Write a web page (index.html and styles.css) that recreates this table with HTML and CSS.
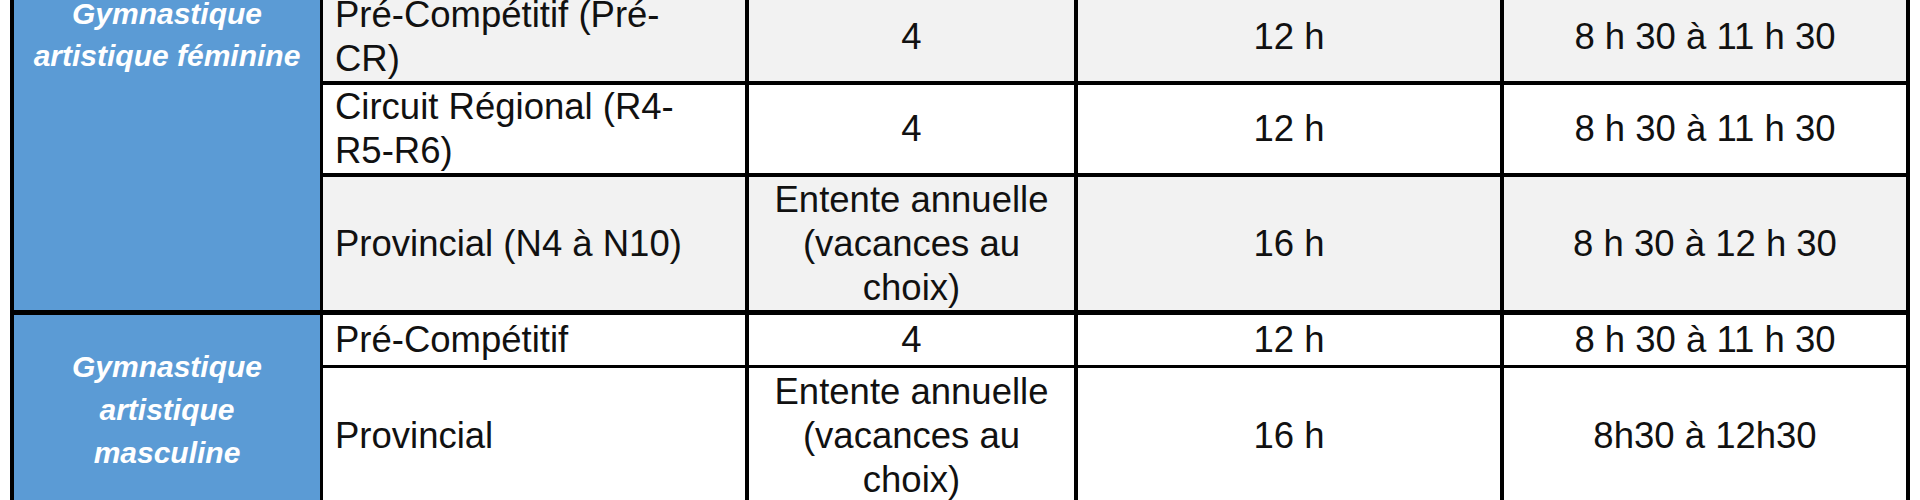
FILE: index.html
```html
<!DOCTYPE html>
<html lang="fr">
<head>
<meta charset="utf-8">
<title>Horaires gymnastique</title>
<link rel="stylesheet" href="styles.css">
</head>
<body>
<table class="schedule">
  <colgroup>
    <col class="c-discipline">
    <col class="c-level">
    <col class="c-days">
    <col class="c-hours">
    <col class="c-time">
  </colgroup>
  <tbody>
    <tr class="row-shaded row-1">
      <td class="discipline discipline-top" rowspan="3">Gymnastique artistique féminine</td>
      <td class="level">Pré-Compétitif (Pré-CR)</td>
      <td class="center">4</td>
      <td class="center">12 h</td>
      <td class="center">8 h 30 à 11 h 30</td>
    </tr>
    <tr class="row-2">
      <td class="level">Circuit Régional (R4-R5-R6)</td>
      <td class="center">4</td>
      <td class="center">12 h</td>
      <td class="center">8 h 30 à 11 h 30</td>
    </tr>
    <tr class="row-shaded row-3 group-end">
      <td class="level">Provincial (N4 à N10)</td>
      <td class="center">Entente annuelle (vacances au choix)</td>
      <td class="center">16 h</td>
      <td class="center">8 h 30 à 12 h 30</td>
    </tr>
    <tr class="row-4">
      <td class="discipline" rowspan="2">Gymnastique artistique masculine</td>
      <td class="level">Pré-Compétitif</td>
      <td class="center">4</td>
      <td class="center">12 h</td>
      <td class="center">8 h 30 à 11 h 30</td>
    </tr>
    <tr class="row-5">
      <td class="level">Provincial</td>
      <td class="center">Entente annuelle (vacances au choix)</td>
      <td class="center">16 h</td>
      <td class="center">8h30 à 12h30</td>
    </tr>
  </tbody>
</table>
</body>
</html>
```

FILE: styles.css
```css
html, body {
  margin: 0;
  padding: 0;
  background: #ffffff;
}

body {
  font-family: "Liberation Sans", Arial, Helvetica, sans-serif;
  color: #111111;
  overflow: hidden;
}

.schedule {
  margin: -7px 0 0 10px;
  width: 1900px;
  table-layout: fixed;
  border-collapse: separate;
  border-spacing: 0;
  border-left: 4px solid #000;
}

.c-discipline { width: 309px; }
.c-level { width: 426px; }
.c-days { width: 329px; }
.c-hours { width: 426px; }
.c-time { width: 406px; }

.schedule td {
  font-size: 36.5px;
  line-height: 44px;
  padding: 0 12px;
  vertical-align: middle;
  border-right: 4px solid #000;
  border-bottom: 4px solid #000;
  background: #ffffff;
}

.schedule .row-shaded td {
  background: #f2f2f2;
}

.schedule td.level {
  text-align: left;
  padding-right: 50px;
}

.schedule td.center {
  text-align: center;
}

.schedule td.discipline {
  background: #5b9bd5;
  color: #ffffff;
  font-weight: bold;
  font-style: italic;
  font-size: 30px;
  line-height: 43px;
  text-align: center;
  border-right-width: 3px;
}

.schedule td.discipline-top {
  vertical-align: top;
  line-height: 42px;
  padding-top: 0;
  border-bottom-width: 5px;
}

.schedule .row-3 td {
  padding-top: 1px;
  padding-bottom: 0;
  border-bottom-width: 5px;
}

.schedule .row-4 td {
  padding-top: 3px;
  padding-bottom: 3px;
  border-bottom-width: 3px;
}

.schedule .row-5 td {
  padding-top: 2px;
  padding-bottom: 2px;
  border-bottom-width: 3px;
}

.schedule .row-4 td.discipline {
  padding-top: 0;
  padding-bottom: 0;
}
```
